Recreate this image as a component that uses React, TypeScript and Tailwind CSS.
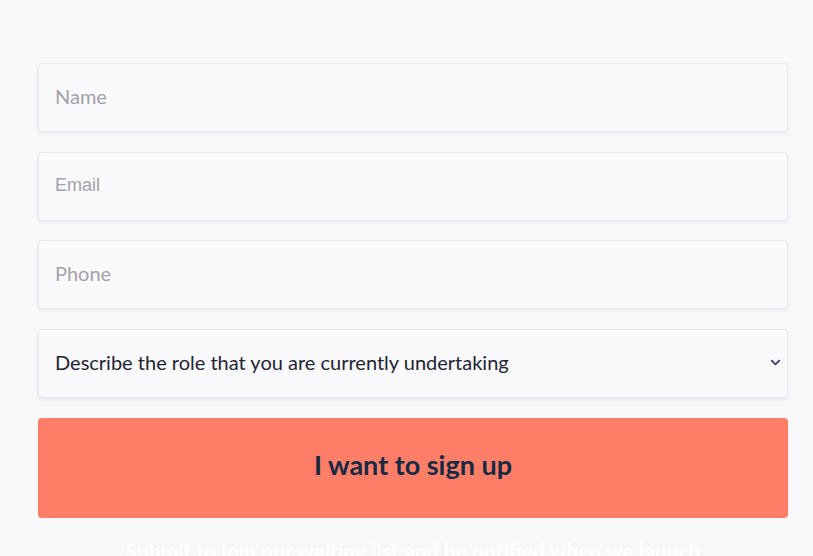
import { ChevronDown } from 'lucide-react'

const FIELD =
  'h-[69px] w-full rounded border border-[#ebe9f0] bg-[#faf9fc] px-4 pb-[4px] text-[20px] text-[#1f2433] shadow-[0_2px_4px_rgba(30,20,60,0.06)] outline-none placeholder:text-[#a3a2aa]'

export default function App() {
  return (
    <div
      className="min-h-[556px] w-full overflow-hidden bg-[#f8f7fa]"
      style={{ fontFamily: "Lato, 'Open Sans', sans-serif" }}
    >
      <form className="ml-[38px] flex w-[750px] flex-col gap-5 pt-[63px]">
        <input type="text" placeholder="Name" className={FIELD} />
        <input
          type="email"
          placeholder="Email"
          className={`${FIELD} !pb-[2px] !text-[18px]`}
          style={{ fontFamily: "'Liberation Sans', Arial, sans-serif" }}
        />
        <input type="tel" placeholder="Phone" className={`${FIELD} -mt-px`} />
        <div className="relative">
          <select className={`${FIELD} appearance-none`} defaultValue="">
            <option value="">Describe the role that you are currently undertaking</option>
          </select>
          <ChevronDown
            size={15}
            strokeWidth={3}
            className="pointer-events-none absolute right-[5px] top-[26px] text-[#463f70]"
          />
        </div>
        <button
          type="button"
          className="h-[100px] w-full rounded bg-[#ff7e67] pb-[5px] text-[27px] font-bold text-[#172a45]"
        >
          I want to sign up
        </button>
        <p className="-mt-[3px] text-center text-[21px] font-bold text-white">
          Submit to join our waiting list and be notified when we launch
        </p>
      </form>
    </div>
  )
}
